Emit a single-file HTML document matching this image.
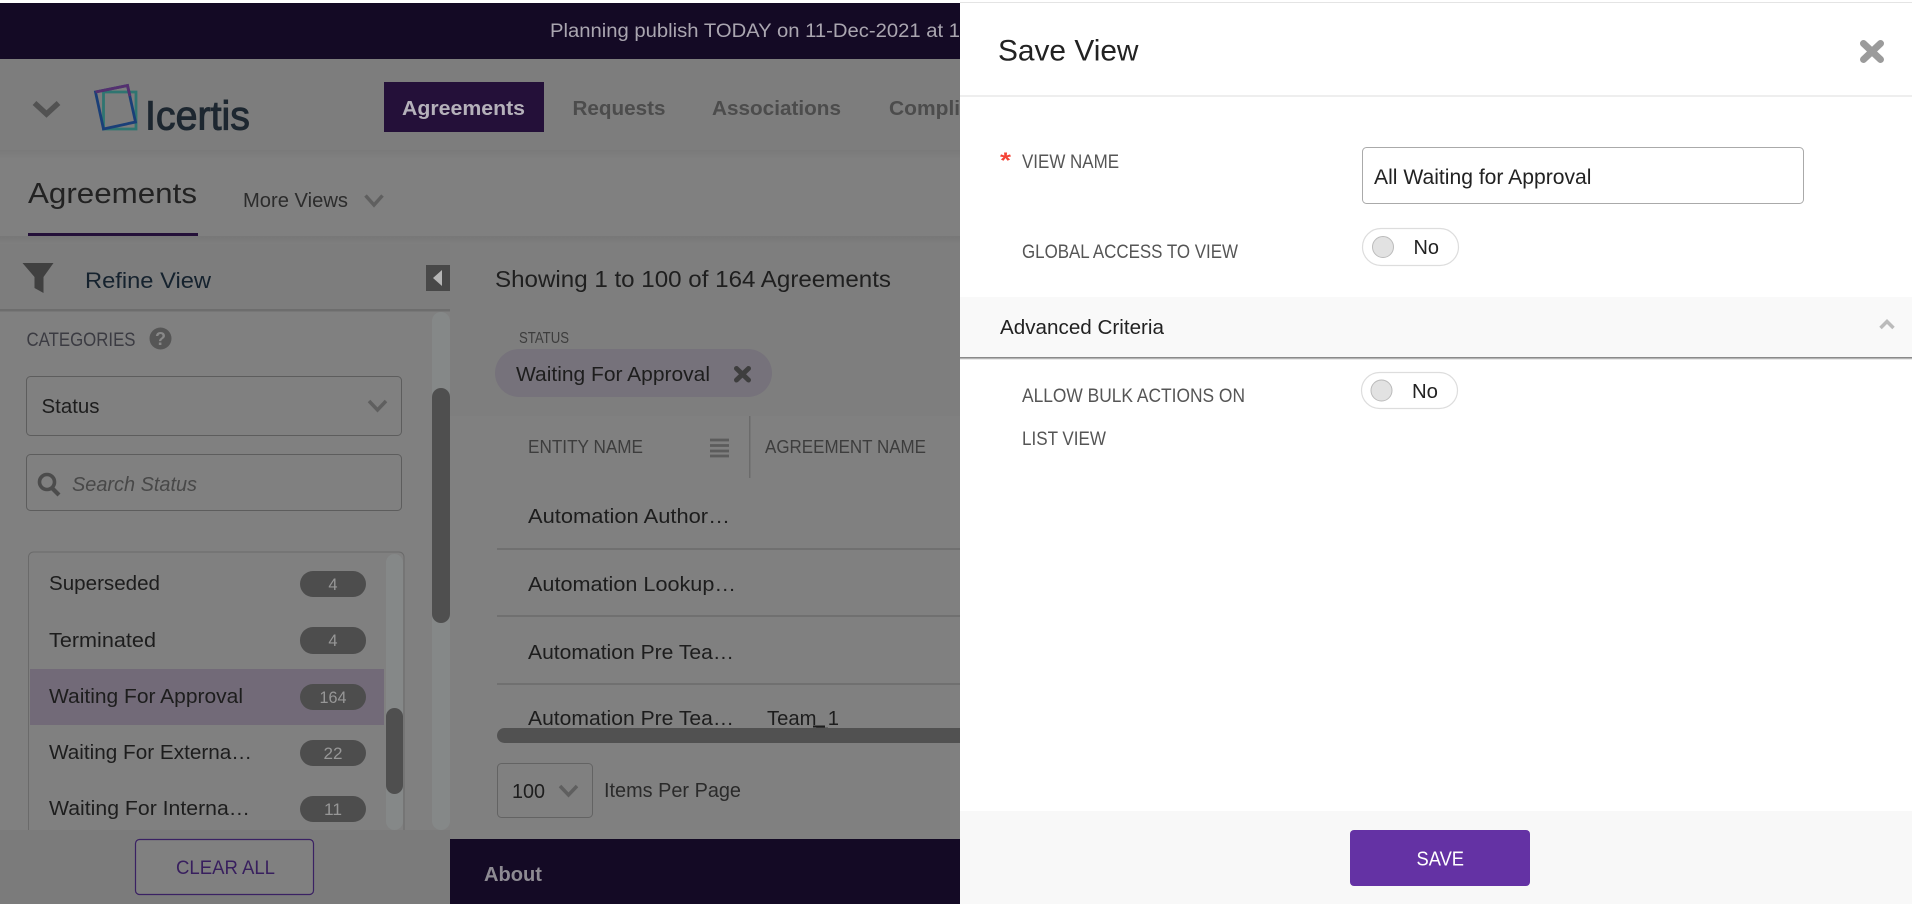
<!DOCTYPE html>
<html lang="en">
<head>
<meta charset="utf-8">
<title>Save View</title>
<style>
html,body{margin:0;padding:0;width:1912px;height:904px;overflow:hidden;background:#808080}
svg{display:block;position:absolute;left:0;top:0}
text{font-family:"Liberation Sans",Arial,sans-serif}
</style>
</head>
<body>
<svg width="1912" height="904" viewBox="0 0 1912 904" xmlns="http://www.w3.org/2000/svg">
<defs>
<linearGradient id="navshadow" x1="0" y1="0" x2="0" y2="1"><stop offset="0" stop-color="#7a7a7a"/><stop offset="1" stop-color="#808080"/></linearGradient>
<linearGradient id="subshadow" x1="0" y1="0" x2="0" y2="1"><stop offset="0" stop-color="#777"/><stop offset="1" stop-color="#7e7e7e"/></linearGradient>
<clipPath id="rowclip"><rect x="497" y="480" width="463" height="251"/></clipPath>
</defs>

<!-- page -->
<rect width="1912" height="904" fill="#808080"/>
<rect width="1912" height="3" fill="#ffffff"/>

<!-- banner -->
<rect y="3" width="960" height="56" fill="#140a25"/>
<text x="550" y="37" font-size="19" fill="#aaa6b0" textLength="410" lengthAdjust="spacingAndGlyphs">Planning publish TODAY on 11-Dec-2021 at 1</text>

<!-- nav -->
<rect y="59" width="960" height="96" fill="#7d7d7d"/>
<rect y="150" width="960" height="9" fill="url(#navshadow)"/>
<path d="M34.5 103 L46.5 114 L58.5 103" fill="none" stroke="#525252" stroke-width="5.5"/>
<path d="M103.5 92 H136 V129 H103.5 Z" fill="none" stroke="#2f7571" stroke-width="2.8"/>
<path d="M95.5 92 L127.5 85.5 L135.5 122 L103.5 129 Z" fill="none" stroke="#1a3f78" stroke-width="2.8"/>
<path d="M95.5 92 L127.5 85.5 L130 96" fill="none" stroke="#55306f" stroke-width="2.8"/>
<text x="145" y="129.5" font-size="41" fill="#1d2730" stroke="#1d2730" stroke-width="1" textLength="105" lengthAdjust="spacingAndGlyphs">Icertis</text>
<rect x="384" y="82" width="160" height="50" fill="#241039"/>
<text x="402" y="115" font-size="20.5" font-weight="bold" fill="#b5b1ba" textLength="123" lengthAdjust="spacingAndGlyphs">Agreements</text>
<text x="572.5" y="115" font-size="20.5" font-weight="bold" fill="#4c4c4c" textLength="93" lengthAdjust="spacingAndGlyphs">Requests</text>
<text x="712" y="115" font-size="20.5" font-weight="bold" fill="#4c4c4c" textLength="129" lengthAdjust="spacingAndGlyphs">Associations</text>
<text x="889" y="115" font-size="20.5" font-weight="bold" fill="#4c4c4c" textLength="119" lengthAdjust="spacingAndGlyphs">Compliance</text>

<!-- sub header -->
<text x="28" y="203" font-size="28.5" fill="#222" textLength="169" lengthAdjust="spacingAndGlyphs">Agreements</text>
<rect x="28" y="233" width="170" height="3" fill="#241039"/>
<text x="243" y="207" font-size="20" fill="#2c2c2c" textLength="105" lengthAdjust="spacingAndGlyphs">More Views</text>
<path d="M365.5 195.5 L374 205 L382.5 195.5" fill="none" stroke="#5f5f5f" stroke-width="3.5"/>

<!-- content -->
<rect x="450" y="236" width="510" height="180" fill="#7e7e7e"/>
<rect x="450" y="236" width="510" height="8" fill="url(#subshadow)"/>
<rect x="0" y="236" width="450" height="8" fill="url(#subshadow)"/>
<rect x="0" y="244" width="450" height="65" fill="#7d7d7d"/>
<text x="495" y="287" font-size="23" fill="#1f1f1f" textLength="396" lengthAdjust="spacingAndGlyphs">Showing 1 to 100 of 164 Agreements</text>
<text x="519" y="343" font-size="16" fill="#3d3d3d" textLength="50" lengthAdjust="spacingAndGlyphs">STATUS</text>
<rect x="495" y="349" width="277" height="48" rx="24" fill="#76727b"/>
<text x="516" y="381" font-size="20.5" fill="#1d1d1d" textLength="194" lengthAdjust="spacingAndGlyphs">Waiting For Approval</text>
<path d="M736.5 368.5 L748.5 380 M748.5 368.5 L736.5 380" fill="none" stroke="#3e3e3e" stroke-width="5" stroke-linecap="round"/>

<!-- table -->
<text x="528" y="453" font-size="18.5" fill="#3d3d3d" textLength="115" lengthAdjust="spacingAndGlyphs">ENTITY NAME</text>
<path d="M710 440 H729 M710 445.5 H729 M710 451 H729 M710 456 H729" stroke="#5c5c5c" stroke-width="2.8"/>
<rect x="749" y="416" width="1.5" height="62" fill="#6b6b6b"/>
<text x="765" y="453" font-size="18.5" fill="#3d3d3d" textLength="161" lengthAdjust="spacingAndGlyphs">AGREEMENT NAME</text>
<text x="528" y="523" font-size="20.5" fill="#1d1d1d" textLength="202" lengthAdjust="spacingAndGlyphs">Automation Author…</text>
<rect x="497" y="548" width="463" height="2" fill="#707070"/>
<text x="528" y="591" font-size="20.5" fill="#1d1d1d" textLength="208" lengthAdjust="spacingAndGlyphs">Automation Lookup…</text>
<rect x="497" y="615" width="463" height="2" fill="#707070"/>
<text x="528" y="659" font-size="20.5" fill="#1d1d1d" textLength="206" lengthAdjust="spacingAndGlyphs">Automation Pre Tea…</text>
<rect x="497" y="683" width="463" height="2" fill="#707070"/>
<g clip-path="url(#rowclip)">
<text x="528" y="725" font-size="20.5" fill="#1d1d1d" textLength="206" lengthAdjust="spacingAndGlyphs">Automation Pre Tea…</text>
<text x="767" y="725" font-size="20.5" fill="#1d1d1d" textLength="72" lengthAdjust="spacingAndGlyphs">Team_1</text>
</g>
<rect x="813" y="725.5" width="12" height="2" fill="#1d1d1d"/>
<rect x="497" y="728" width="480" height="15" rx="7.5" fill="#515151"/>
<rect x="497.5" y="763.5" width="95" height="54" rx="4" fill="none" stroke="#636363" stroke-width="1"/>
<text x="512" y="798" font-size="20.5" fill="#1d1d1d" textLength="33" lengthAdjust="spacingAndGlyphs">100</text>
<path d="M560 786 L568.5 795 L577 786" fill="none" stroke="#5f5f5f" stroke-width="3.5"/>
<text x="604" y="797" font-size="20.5" fill="#2a2a2a" textLength="137" lengthAdjust="spacingAndGlyphs">Items Per Page</text>

<!-- left panel -->
<path d="M22.5 263 H53.5 L43.5 277 V293 L34.5 288 V277 Z" fill="#404040"/>
<text x="85" y="288" font-size="22.5" fill="#15222e" textLength="126" lengthAdjust="spacingAndGlyphs">Refine View</text>
<rect x="426" y="265" width="24" height="26" fill="#484848"/>
<path d="M442 270 L433 278 L442 286 Z" fill="#b5b5b5"/>
<rect x="0" y="309" width="450" height="2" fill="#6d6d6d"/>
<rect x="0" y="311" width="450" height="1" fill="#777"/>
<text x="26.5" y="346" font-size="19" fill="#3b3b42" textLength="109" lengthAdjust="spacingAndGlyphs">CATEGORIES</text>
<circle cx="160.5" cy="338.5" r="11" fill="#565656"/>
<text x="160.5" y="345" font-size="18" font-weight="bold" fill="#888" text-anchor="middle">?</text>
<rect x="432" y="312" width="18" height="518" rx="9" fill="#858888"/>
<rect x="432" y="388" width="18" height="235" rx="9" fill="#4f4f4f"/>

<rect x="26.5" y="376.5" width="375" height="59" rx="4" fill="none" stroke="#5d5d5d" stroke-width="1"/>
<text x="41.5" y="413" font-size="20.5" fill="#1d1d1d" textLength="58" lengthAdjust="spacingAndGlyphs">Status</text>
<path d="M369 401 L377.5 410 L386 401" fill="none" stroke="#5f5f5f" stroke-width="3.5"/>

<rect x="26.5" y="454.5" width="375" height="56" rx="4" fill="none" stroke="#5d5d5d" stroke-width="1"/>
<circle cx="47" cy="482" r="7.5" fill="none" stroke="#4c4c4c" stroke-width="3.6"/>
<path d="M52 488 L59 495" stroke="#4c4c4c" stroke-width="4.2"/>
<text x="72" y="491" font-size="20" font-style="italic" fill="#484848" textLength="125" lengthAdjust="spacingAndGlyphs">Search Status</text>

<!-- list -->
<path d="M28.5 830 V557 a5 5 0 0 1 5 -5 H399 a5 5 0 0 1 5 5 V830" fill="none" stroke="#6a6a6a" stroke-width="1"/>
<rect x="386" y="554" width="17" height="276" rx="8.5" fill="#858888"/>
<rect x="386" y="708" width="17" height="86" rx="8.5" fill="#4f4f4f"/>
<rect x="30" y="669" width="354" height="56" fill="#726a78"/>
<text x="49" y="590" font-size="20.5" fill="#1d1d1d" textLength="111" lengthAdjust="spacingAndGlyphs">Superseded</text>
<text x="49" y="647" font-size="20.5" fill="#1d1d1d" textLength="107" lengthAdjust="spacingAndGlyphs">Terminated</text>
<text x="49" y="703" font-size="20.5" fill="#1d1d1d" textLength="194" lengthAdjust="spacingAndGlyphs">Waiting For Approval</text>
<text x="49" y="759" font-size="20.5" fill="#1d1d1d" textLength="203" lengthAdjust="spacingAndGlyphs">Waiting For Externa…</text>
<text x="49" y="815" font-size="20.5" fill="#1d1d1d" textLength="201" lengthAdjust="spacingAndGlyphs">Waiting For Interna…</text>
<g fill="#4d4d4d">
<rect x="300" y="571" width="66" height="26" rx="13"/>
<rect x="300" y="627" width="66" height="27" rx="13"/>
<rect x="300" y="684" width="66" height="26" rx="13"/>
<rect x="300" y="740" width="66" height="26" rx="13"/>
<rect x="300" y="796" width="66" height="26" rx="13"/>
</g>
<g font-size="16.5" fill="#979797" text-anchor="middle">
<text x="333" y="590">4</text>
<text x="333" y="646">4</text>
<text x="333" y="703" textLength="27" lengthAdjust="spacingAndGlyphs">164</text>
<text x="333" y="759" textLength="19" lengthAdjust="spacingAndGlyphs">22</text>
<text x="333" y="815" textLength="18" lengthAdjust="spacingAndGlyphs">11</text>
</g>

<!-- bottom -->
<rect x="0" y="830" width="450" height="74" fill="#7b7b7b"/>
<rect x="135.5" y="839.5" width="178" height="55" rx="4" fill="#808080" stroke="#3a2163" stroke-width="1.2"/>
<text x="176" y="874" font-size="19.5" fill="#381f5e" textLength="99" lengthAdjust="spacingAndGlyphs">CLEAR ALL</text>
<rect x="450" y="839" width="510" height="65" fill="#140a25"/>
<text x="484" y="881" font-size="20.5" font-weight="bold" fill="#8d8a92" textLength="58" lengthAdjust="spacingAndGlyphs">About</text>

<!-- slide panel -->
<rect x="960" y="0" width="952" height="904" fill="#ffffff"/>
<rect x="960" y="2" width="952" height="1" fill="#e4e4e4"/>
<text x="998" y="60.5" font-size="30" fill="#222" textLength="140.5" lengthAdjust="spacingAndGlyphs">Save View</text>
<path d="M1863.5 43.5 L1880.5 59.5 M1880.5 43.5 L1863.5 59.5" fill="none" stroke="#9b9b9b" stroke-width="7" stroke-linecap="round"/>
<rect x="960" y="95" width="952" height="2" fill="#eeeeee"/>

<text x="1000" y="168" font-size="22" font-weight="bold" fill="#f44336" textLength="11" lengthAdjust="spacingAndGlyphs">*</text>
<text x="1022" y="168" font-size="19" fill="#555" textLength="97" lengthAdjust="spacingAndGlyphs">VIEW NAME</text>
<rect x="1362.5" y="147.5" width="441" height="56" rx="4" fill="#fff" stroke="#aaaaaa" stroke-width="1"/>
<text x="1374" y="184" font-size="21" fill="#222" textLength="217.5" lengthAdjust="spacingAndGlyphs">All Waiting for Approval</text>

<text x="1022" y="258" font-size="19" fill="#555" textLength="216" lengthAdjust="spacingAndGlyphs">GLOBAL ACCESS TO VIEW</text>
<rect x="1362.5" y="228.5" width="96" height="37" rx="18.5" fill="#fff" stroke="#dddddd" stroke-width="1.2"/>
<circle cx="1383" cy="247" r="10.5" fill="#e2e2e2" stroke="#bbbbbb"/>
<text x="1413.5" y="254" font-size="20.5" fill="#222" textLength="25.5" lengthAdjust="spacingAndGlyphs">No</text>

<rect x="960" y="297" width="952" height="60" fill="#f9f9f9"/>
<rect x="960" y="357" width="952" height="1.6" fill="#8a8a8a"/>
<rect x="960" y="358.6" width="952" height="1" fill="#dddddd"/>
<text x="1000" y="334" font-size="20.5" fill="#222" textLength="164" lengthAdjust="spacingAndGlyphs">Advanced Criteria</text>
<path d="M1880.5 328 L1887 321.5 L1893.5 328" fill="none" stroke="#bbbbbb" stroke-width="3.5"/>

<text x="1022" y="402" font-size="19" fill="#555" textLength="223" lengthAdjust="spacingAndGlyphs">ALLOW BULK ACTIONS ON</text>
<text x="1022" y="445" font-size="19" fill="#555" textLength="84" lengthAdjust="spacingAndGlyphs">LIST VIEW</text>
<rect x="1361.5" y="372.5" width="96" height="36" rx="18" fill="#fff" stroke="#dddddd" stroke-width="1.2"/>
<circle cx="1381.5" cy="390.5" r="10.5" fill="#e2e2e2" stroke="#bbbbbb"/>
<text x="1412" y="398" font-size="20.5" fill="#222" textLength="26" lengthAdjust="spacingAndGlyphs">No</text>

<rect x="960" y="811" width="952" height="93" fill="#f8f8f8"/>
<rect x="1350" y="830" width="180" height="56" rx="4" fill="#6432a4"/>
<text x="1416.5" y="865.5" font-size="20" fill="#ffffff" textLength="47.5" lengthAdjust="spacingAndGlyphs">SAVE</text>
</svg>
</body>
</html>
